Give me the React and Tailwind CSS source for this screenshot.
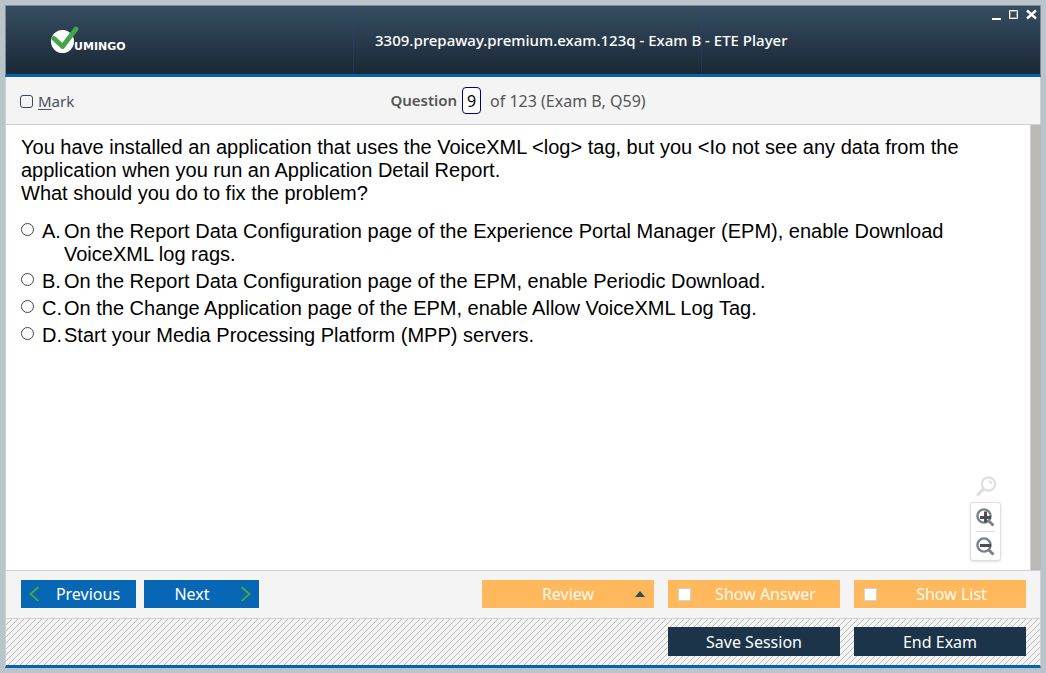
import React, { useState } from "react";

const options = [
  { id: "A", text: "On the Report Data Configuration page of the Experience Portal Manager (EPM), enable Download VoiceXML log rags." },
  { id: "B", text: "On the Report Data Configuration page of the EPM, enable Periodic Download." },
  { id: "C", text: "On the Change Application page of the EPM, enable Allow VoiceXML Log Tag." },
  { id: "D", text: "Start your Media Processing Platform (MPP) servers." },
];

function Logo() {
  return (
    <svg width="84" height="30" viewBox="0 0 84 30" role="img" aria-label="Vumingo">
      <circle cx="12.5" cy="15.5" r="11.5" fill="#fff" />
      <path d="M4 12.5 L12.5 20.5 L26 3" fill="none" stroke="#43a547" strokeWidth="4.8" strokeLinecap="round" strokeLinejoin="round" />
      <text x="24" y="24" fill="#fff" fontFamily="'DejaVu Sans', sans-serif" fontWeight="700" fontSize="11">UMINGO</text>
    </svg>
  );
}

function WindowControls() {
  return (
    <div className="flex gap-[7px]">
      <button type="button" aria-label="Minimize" className="h-3 w-2.5">
        <svg width="10" height="12" viewBox="0 0 10 12"><path d="M0 10h9" stroke="#fff" strokeWidth="2" /></svg>
      </button>
      <button type="button" aria-label="Maximize" className="h-3 w-2.5">
        <svg width="10" height="12" viewBox="0 0 10 12"><path d="M.5 1.5h8v8h-8z" fill="none" stroke="#fff" /><path d="M1.5 2.5h6v6h-6z" fill="none" stroke="#8a8a8a" /></svg>
      </button>
      <button type="button" aria-label="Close" className="h-3 w-3">
        <svg width="12" height="12" viewBox="0 0 12 12"><path d="M1 1.5l9 8M10 1.5l-9 8" stroke="#fff" strokeWidth="2.4" /></svg>
      </button>
    </div>
  );
}

function ZoomTools() {
  return (
    <div className="absolute right-10 bottom-[9px] flex flex-col items-center gap-1">
      <button type="button" aria-label="Reset zoom">
        <svg width="22" height="22" viewBox="0 0 22 22" fill="none" stroke="#dedede">
          <circle cx="13.5" cy="8" r="6.6" strokeWidth="2.2" />
          <path d="M8.5 13L3 18.5" strokeWidth="3.2" strokeLinecap="round" />
          <path d="M13.5 5a3 3 0 0 1 3 3" strokeWidth="1.4" />
        </svg>
      </button>
      <div className="flex flex-col items-center rounded-[3px] border border-[#dedede] bg-white px-[5px] shadow-sm">
        <button type="button" aria-label="Zoom in" className="flex h-7 items-center">
          <svg width="19" height="20" viewBox="0 -1 19 20" fill="none">
            <circle cx="8" cy="8" r="6.6" stroke="#75838f" strokeWidth="2.4" />
            <path d="M12.8 13L17.5 17.5" stroke="#75838f" strokeWidth="3" />
            <path d="M9.5 3.5v11M4 9.5h11" stroke="#4d4d4d" strokeWidth="3" />
          </svg>
        </button>
        <div className="h-px w-full bg-[#dedede]" />
        <button type="button" aria-label="Zoom out" className="flex h-7 items-center">
          <svg width="19" height="20" viewBox="0 -1 19 20" fill="none">
            <circle cx="8" cy="8" r="6.6" stroke="#75838f" strokeWidth="2.4" />
            <path d="M12.8 13L17.5 17.5" stroke="#75838f" strokeWidth="3" />
            <path d="M4 8.5h11" stroke="#4d4d4d" strokeWidth="3" />
          </svg>
        </button>
      </div>
    </div>
  );
}

function ToggleButton({ label }) {
  return (
    <label className="flex h-7 w-[172px] items-center bg-[#ffb85c] pl-2.5 text-[#fffaf0]">
      <input type="checkbox" className="h-[13px] w-[13px] shrink-0 appearance-none border border-[#d0d0d0] bg-white checked:bg-[#1b3449]" />
      <span className="flex-1 text-center">{label}</span>
    </label>
  );
}

export default function App() {
  const [answer, setAnswer] = useState("");
  return (
    <div className="flex h-screen flex-col bg-[#b9c5cb] p-[5px] font-['Noto_Sans',sans-serif] text-base">
      <header className="relative grid h-[72px] shrink-0 grid-cols-[19fr_auto_13fr] border-x border-t border-b-[3px] border-x-[#7f8d93] border-t-[#7f8d93] border-b-[#0860b0] bg-linear-to-b from-[#364e62] to-[#1b2836] text-white">
        <div className="absolute inset-y-0 left-[347px] border-l border-dotted border-[#3440a0]/60" />
        <div className="absolute inset-y-0 left-[695px] border-l border-dotted border-[#3440a0]/60" />
        <div className="pt-5 pl-[44px]"><Logo /></div>
        <h1 className="relative self-center text-center text-[15px] font-medium">3309.prepaway.premium.exam.123q - Exam B - ETE Player</h1>
        <div className="flex items-start justify-end pt-[3px] pr-0.5"><WindowControls /></div>
      </header>

      <div className="grid h-12 shrink-0 grid-cols-[1fr_2fr_1fr] items-center border-x border-b border-[#d0d0d0] bg-[#f4f4f4] text-[#555]">
        <label className="flex items-center gap-[5px] pt-0.5 pl-3.5 text-[15px] text-[#44515e]">
          <input type="checkbox" className="h-[13px] w-[13px] appearance-none rounded-[3px] border border-[#34495c] checked:bg-[#34495c]" />
          <span><span className="underline underline-offset-2">M</span>ark</span>
        </label>
        <div className="flex items-center justify-center pr-2.5">
          <label htmlFor="question" className="text-[15px] font-semibold">Question</label>
          <input id="question" defaultValue="9" className="mr-[9px] ml-[5px] h-[27px] w-[19px] rounded-[4px] border border-[#00007a] bg-white text-center text-black" />
          <span>of 123 (Exam B, Q59)</span>
        </div>
      </div>

      <main className="relative flex min-h-0 flex-1 border-l border-[#d0d0d0] bg-white font-['Liberation_Sans',Arial,sans-serif] text-[20px] leading-[23px] text-black">
        <div className="min-w-0 flex-1 overflow-hidden pt-[11px] pr-[60px] pl-[15px]">
          <p>You have installed an application that uses the VoiceXML &lt;log&gt; tag, but you &lt;Io not see any data from the application when you run an Application Detail Report.</p>
          <p>What should you do to fix the problem?</p>
          <div role="radiogroup" aria-label="Answers" className="mt-[15px] flex flex-col gap-1">
            {options.map((o) => (
              <label key={o.id} className="flex items-start">
                <input type="radio" name="answer" checked={answer === o.id} onChange={() => setAnswer(o.id)} className="mt-[3px] mr-2 h-[13px] w-[13px] shrink-0 appearance-none rounded-full border border-[#444] checked:bg-[#444]" />
                <span className="w-[22px] shrink-0">{o.id}.</span>
                <span>{o.text}</span>
              </label>
            ))}
          </div>
        </div>
        <div className="w-[11px] shrink-0 border-l border-[#d0d0d0] bg-[#bab9b5]" />
        <ZoomTools />
      </main>

      <div className="flex h-12 shrink-0 items-start justify-between border-x border-t border-[#d0d0d0] bg-[#f4f4f4] pt-[9px] pr-3.5 pl-[15px] text-white">
        <div className="flex gap-2">
          <button type="button" className="flex h-7 w-[115px] items-center bg-[#0867b5] pl-2">
            <svg width="11" height="16" viewBox="0 0 11 16" fill="none" stroke="#43a547" strokeWidth="2"><path d="M9.5 1L1.5 8l8 7" /></svg>
            <span className="flex-1 text-center">Previous</span>
          </button>
          <button type="button" className="flex h-7 w-[115px] items-center bg-[#0867b5] pr-2">
            <span className="flex-1 text-center">Next</span>
            <svg width="11" height="16" viewBox="0 0 11 16" fill="none" stroke="#43a547" strokeWidth="2"><path d="M1.5 1l8 7l-8 7" /></svg>
          </button>
        </div>
        <div className="flex gap-3.5">
          <button type="button" className="flex h-7 w-[172px] items-center bg-[#ffb85c] px-[9px] text-[#fffaf0]">
            <span className="flex-1 pl-2.5 text-center">Review</span>
            <svg width="10" height="6" viewBox="0 0 10 6"><path d="M0 6l5-6l5 6z" fill="#34495c" /></svg>
          </button>
          <ToggleButton label="Show Answer" />
          <ToggleButton label="Show List" />
        </div>
      </div>

      <footer className="flex h-[50px] shrink-0 items-start justify-end gap-3.5 border-x border-t border-b-[3px] border-[#d0d0d0] border-b-[#0860b0] bg-[#f4f4f4] bg-[linear-gradient(135deg,transparent_45%,#bdbdbd_45%,#bdbdbd_55%,transparent_55%)] bg-size-[6px_6px] px-3.5 pt-2 text-white">
        <button type="button" className="h-[29px] w-[172px] bg-[#1b3449]">Save Session</button>
        <button type="button" className="h-[29px] w-[172px] bg-[#1b3449]">End Exam</button>
      </footer>
    </div>
  );
}
